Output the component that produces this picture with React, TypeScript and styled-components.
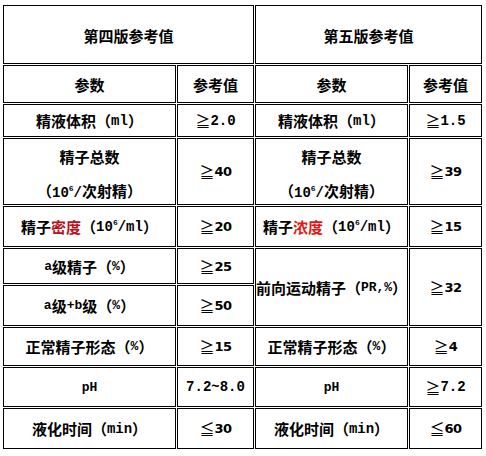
import * as React from 'react';
import styled, { createGlobalStyle } from 'styled-components';

const GlobalStyle = createGlobalStyle`
	html, body {
		margin: 0;
		padding: 0;
		background: #fff;
	}
	body {
		font-family: 'Noto Sans CJK SC', 'DejaVu Sans', sans-serif;
		color: #000;
	}
`;

const Page = styled.div`
	padding: 5px 0 0 3px;
	width: 486px;
	height: 456px;
	box-sizing: border-box;
`;

const Sheet = styled.div`
	display: grid;
	grid-template-columns: 173px 77px 153px 73px;
	grid-template-rows: 59px 38px 33px 67px 41px 36px 41px 39px 40px 41px;
	gap: 1px;
`;

const Cell = styled.div<{ $span: number; $rows: number; $title: boolean }>`
	grid-column: span ${props => props.$span};
	grid-row: span ${props => props.$rows};
	border: 1px solid #000;
	display: flex;
	align-items: center;
	justify-content: center;
	text-align: center;
	font-size: 15px;
	font-weight: 700;
	line-height: 1;
	white-space: nowrap;
	padding-top: ${props => (props.$title ? '1px' : '0')};
`;

const TwoLines = styled.div`
	display: flex;
	flex-direction: column;
	align-items: center;
	gap: 19px;
	padding-top: 5px;
`;

const Red = styled.span<{ $tone: string }>`
	color: ${props => props.$tone};
`;

const Latin = styled.span`
	font-family: 'Liberation Mono', 'DejaVu Sans Mono', monospace;
	font-size: 14px;
	font-weight: 700;
`;

const Small = styled.span`
	font-family: 'Liberation Mono', 'DejaVu Sans Mono', monospace;
	font-size: 13px;
	font-weight: 700;
`;

const Power = styled.sup`
	font-size: 8px;
	vertical-align: 6px;
	line-height: 0;
`;

const Sign = styled.span`
	font-size: 15px;
	font-weight: 400;
`;

const Digits = styled.span<{ $kind: 'mono' | 'sans' }>`
	font-family: ${props =>
		props.$kind === 'mono'
			? "'Liberation Mono', 'DejaVu Sans Mono', monospace"
			: "'DejaVu Sans', 'Liberation Sans', sans-serif"};
	font-size: ${props => (props.$kind === 'mono' ? '14px' : '13px')};
	font-weight: 700;
	letter-spacing: ${props => (props.$kind === 'mono' ? '0' : '-0.5px')};
`;

type CellDef = {
	text: React.ReactNode;
	span?: number;
	rows?: number;
	num?: 'mono' | 'sans';
	title?: boolean;
};

const Sup = () => <Power>6</Power>;

const TotalCount = () => (
	<TwoLines>
		<span>精子总数</span>
		<span>（<Latin>10<Sup />/</Latin>次射精）</span>
	</TwoLines>
);

const cells: CellDef[] = [
	{ text: '第四版参考值', span: 2, title: true },
	{ text: '第五版参考值', span: 2, title: true },

	{ text: '参数' },
	{ text: '参考值' },
	{ text: '参数' },
	{ text: '参考值' },

	{ text: <>精液体积（<Latin>ml</Latin>）</> },
	{ text: '≧2.0', num: 'mono' },
	{ text: <>精液体积（<Latin>ml</Latin>）</> },
	{ text: '≧1.5', num: 'mono' },

	{ text: <TotalCount /> },
	{ text: '≧40', num: 'sans' },
	{ text: <TotalCount /> },
	{ text: '≧39', num: 'sans' },

	{ text: <>精子<Red $tone="#b8101c">密度</Red>（<Latin>10<Sup />/ml</Latin>）</> },
	{ text: '≧20', num: 'sans' },
	{ text: <>精子<Red $tone="#e01818">浓度</Red>（<Latin>10<Sup />/ml</Latin>）</> },
	{ text: '≧15', num: 'sans' },

	{ text: <><Small>a</Small>级精子（<Small>%</Small>）</> },
	{ text: '≧25', num: 'sans' },
	{ text: <>前向运动精子（<Small>PR,%</Small>）</>, rows: 2 },
	{ text: '≧32', num: 'sans', rows: 2 },

	{ text: <><Small>a</Small>级<Small>+b</Small>级（<Small>%</Small>）</> },
	{ text: '≧50', num: 'sans' },

	{ text: <>正常精子形态（<Small>%</Small>）</> },
	{ text: '≧15', num: 'sans' },
	{ text: <>正常精子形态（<Small>%</Small>）</> },
	{ text: '≧4', num: 'sans' },

	{ text: <Small>pH</Small> },
	{ text: '7.2~8.0', num: 'mono' },
	{ text: <Small>pH</Small> },
	{ text: '≧7.2', num: 'mono' },

	{ text: <>液化时间（<Latin>min</Latin>）</> },
	{ text: '≦30', num: 'sans' },
	{ text: <>液化时间（<Latin>min</Latin>）</> },
	{ text: '≦60', num: 'sans' }
];

const renderNumber = (value: string, kind: 'mono' | 'sans') => {
	const sign = value.match(/^[≧≦]/);
	const rest = sign ? value.slice(1) : value;
	return (
		<>
			{sign && <Sign>{sign[0]}</Sign>}
			<Digits $kind={kind}>{rest}</Digits>
		</>
	);
};

export default function App() {
	return (
		<>
			<GlobalStyle />
			<Page>
				<Sheet>
					{cells.map((cell, i) => (
						<Cell key={i} $span={cell.span ?? 1} $rows={cell.rows ?? 1} $title={!!cell.title}>
							{cell.num && typeof cell.text === 'string'
								? renderNumber(cell.text, cell.num)
								: cell.text}
						</Cell>
					))}
				</Sheet>
			</Page>
		</>
	);
}
